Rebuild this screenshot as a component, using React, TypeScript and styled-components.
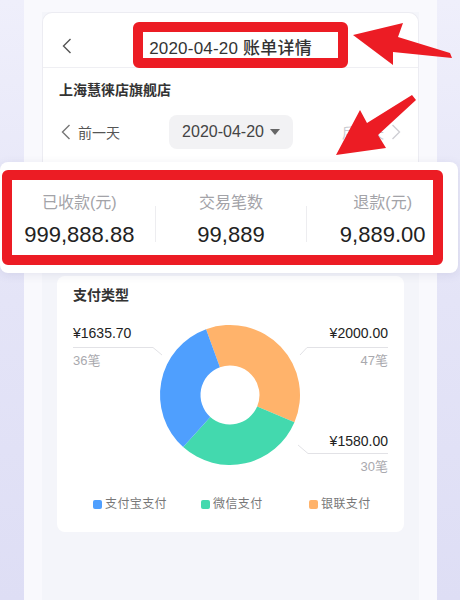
import React from 'react';
import styled, { createGlobalStyle } from 'styled-components';

const GlobalStyle = createGlobalStyle`
  html, body {
    margin: 0;
    padding: 0;
  }
  body {
    font-family: "Liberation Sans", "Noto Sans CJK SC", sans-serif;
    color: #333;
  }
`;

const RED = '#ec1c24';

const Page = styled.div`
  position: relative;
  width: 460px;
  height: 600px;
  overflow: hidden;
  display: flex;
  padding-left: 24px;
  box-sizing: border-box;
  background: linear-gradient(180deg, #efeffb 0%, #e4e4f7 50%, #dedef5 100%);
`;

const Phone = styled.div`
  width: 413px;
  height: 600px;
  box-sizing: border-box;
  padding: 12px 18px 0;
  background: #f9f9fd;
`;

const Screen = styled.div`
  height: 100%;
  background: #f4f5fa;
  display: flex;
  flex-direction: column;
`;

const HeaderCard = styled.div`
  background: #fff;
  border: 1px solid #ececf2;
  border-bottom: none;
  border-radius: 10px 10px 0 0;
  padding-bottom: 113px;
`;

const TitleBar = styled.div`
  position: relative;
  height: 54px;
  border-bottom: 1px solid #efeff3;
  display: flex;
  align-items: center;
  justify-content: center;
`;

const BackButton = styled.span`
  position: absolute;
  left: 19px;
  top: 25px;
  display: flex;
`;

const Title = styled.h1`
  margin: 0;
  padding-top: 12px;
  font-size: 17px;
  font-weight: 500;
  color: #333;
  letter-spacing: 0.2px;
`;

const ShopName = styled.div`
  padding: 12px 16px 0;
  font-size: 14px;
  line-height: 20px;
  font-weight: 600;
  color: #333;
`;

const DateNav = styled.div`
  margin-top: 15px;
  padding: 0 17px 0 18px;
  display: flex;
  align-items: center;
  justify-content: space-between;
`;

const DayLink = styled.span<{ disabled?: boolean }>`
  display: flex;
  align-items: center;
  gap: 7px;
  font-size: 14px;
  color: ${(p) => (p.disabled ? '#c9c9cf' : '#555')};
`;

const DatePill = styled.div`
  width: 124px;
  height: 34px;
  border-radius: 8px;
  background: #f2f2f4;
  display: flex;
  align-items: center;
  justify-content: center;
  gap: 6px;
  font-size: 16px;
  color: #444;
`;

const Caret = styled.span`
  width: 0;
  height: 0;
  border-left: 5px solid transparent;
  border-right: 5px solid transparent;
  border-top: 6px solid #666;
`;

const PayCard = styled.div`
  margin: 14px 15px 0 15px;
  background: #fff;
  border-radius: 8px;
  padding: 9px 15px 20px 16px;
`;

const CardTitle = styled.div`
  font-size: 14px;
  line-height: 20px;
  font-weight: 600;
  color: #333;
`;

const ChartBox = styled.div`
  position: relative;
  margin-top: 13px;
  width: 315px;
  height: 160px;
`;

const ChartLabel = styled.div<{ side: 'left' | 'right'; top: number; count?: boolean }>`
  position: absolute;
  ${(p) => (p.side === 'left' ? 'left: 0;' : 'right: 0;')}
  top: ${(p) => p.top}px;
  line-height: 20px;
  font-size: ${(p) => (p.count ? '13px' : '14px')};
  font-weight: ${(p) => (p.count ? 400 : 500)};
  color: ${(p) => (p.count ? '#a9a9ae' : '#222')};
  white-space: nowrap;
`;

const Legend = styled.div`
  margin-top: 18px;
  padding-left: 20px;
  display: grid;
  grid-template-columns: repeat(3, 108px);
`;

const LegendItem = styled.div`
  display: flex;
  align-items: center;
  gap: 3px;
  font-size: 12px;
  line-height: 16px;
  color: #777;
  letter-spacing: 0.4px;
`;

const Swatch = styled.span<{ color: string }>`
  width: 9px;
  height: 9px;
  border-radius: 2px;
  background: ${(p) => p.color};
`;

/* annotation layer (the zoomed callout and red markers lie over the page) */
const Callout = styled.div`
  position: absolute;
  left: 0;
  top: 162px;
  width: 458px;
  height: 111px;
  box-sizing: border-box;
  padding-left: 4px;
  background: #fff;
  border-radius: 8px;
  box-shadow: 0 2px 10px rgba(90, 90, 140, 0.12);
`;

const StatsRow = styled.div`
  display: grid;
  grid-template-columns: 1fr 1px 1fr 1px 1fr;
  align-items: center;
  height: 100%;
`;

const Stat = styled.div`
  display: flex;
  flex-direction: column;
  align-items: center;
  gap: 7px;
  padding-top: 6px;
`;

const StatLabel = styled.div`
  font-size: 16px;
  line-height: 22px;
  color: #a3a3a8;
`;

const StatValue = styled.div`
  font-size: 22px;
  line-height: 28px;
  color: #222;
`;

const StatDivider = styled.div`
  height: 36px;
  background: #ededf0;
  margin-top: 12px;
`;

const RedFrame = styled.div<{ left: number; top: number; w: number; h: number }>`
  position: absolute;
  left: ${(p) => p.left}px;
  top: ${(p) => p.top}px;
  width: ${(p) => p.w}px;
  height: ${(p) => p.h}px;
  box-sizing: border-box;
  border: 10px solid ${RED};
  border-radius: 6px;
  pointer-events: none;
`;

const ArrowLayer = styled.svg`
  position: absolute;
  left: 0;
  top: 0;
  pointer-events: none;
`;

const Chevron = ({ dir, color }: { dir: 'left' | 'right'; color: string }) => (
  <svg width="10" height="16" viewBox="0 0 10 16">
    <polyline
      points={dir === 'left' ? '8.5,1 1.5,8 8.5,15' : '1.5,1 8.5,8 1.5,15'}
      fill="none"
      stroke={color}
      strokeWidth="1.4"
    />
  </svg>
);

const slices = [
  { color: '#ffb36b', from: -20, to: 113 },
  { color: '#43d9ae', from: 113, to: 222 },
  { color: '#4f9ffe', from: 222, to: 340 },
];

const pt = (cx: number, cy: number, r: number, deg: number) => {
  const a = (deg * Math.PI) / 180;
  return `${(cx + r * Math.sin(a)).toFixed(2)},${(cy - r * Math.cos(a)).toFixed(2)}`;
};

const slicePath = (from: number, to: number) => {
  const cx = 157;
  const cy = 77;
  const R = 70;
  const r = 29.5;
  const big = to - from > 180 ? 1 : 0;
  return `M${pt(cx, cy, R, from)} A${R},${R} 0 ${big} 1 ${pt(cx, cy, R, to)} L${pt(
    cx,
    cy,
    r,
    to,
  )} A${r},${r} 0 ${big} 0 ${pt(cx, cy, r, from)} Z`;
};

const Donut = () => (
  <svg width="315" height="160" viewBox="0 0 315 160" style={{ display: 'block' }}>
    {slices.map((s) => (
      <path key={s.color} d={slicePath(s.from, s.to)} fill={s.color} />
    ))}
    <g fill="none" stroke="#e2e2e6" strokeWidth="1">
      <polyline points="0,29.5 80,29.5 89,37" />
      <polyline points="227,37 234,29.5 315,29.5" />
      <polyline points="225,127 235,135.5 315,135.5" />
    </g>
  </svg>
);

const stats = [
  { label: '已收款(元)', value: '999,888.88' },
  { label: '交易笔数', value: '99,889' },
  { label: '退款(元)', value: '9,889.00' },
];

export default function App() {
  return (
    <>
      <GlobalStyle />
      <Page>
        <Phone>
          <Screen>
            <HeaderCard>
              <TitleBar>
                <BackButton>
                  <Chevron dir="left" color="#555" />
                </BackButton>
                <Title>2020-04-20 账单详情</Title>
              </TitleBar>
              <ShopName>上海慧徕店旗舰店</ShopName>
              <DateNav>
                <DayLink>
                  <Chevron dir="left" color="#777" />
                  前一天
                </DayLink>
                <DatePill>
                  2020-04-20
                  <Caret />
                </DatePill>
                <DayLink disabled>
                  后一天
                  <Chevron dir="right" color="#cfcfd4" />
                </DayLink>
              </DateNav>
            </HeaderCard>

            <PayCard>
              <CardTitle>支付类型</CardTitle>
              <ChartBox>
                <Donut />
                <ChartLabel side="left" top={5}>¥1635.70</ChartLabel>
                <ChartLabel side="left" top={33} count>36笔</ChartLabel>
                <ChartLabel side="right" top={5}>¥2000.00</ChartLabel>
                <ChartLabel side="right" top={33} count>47笔</ChartLabel>
                <ChartLabel side="right" top={113}>¥1580.00</ChartLabel>
                <ChartLabel side="right" top={139} count>30笔</ChartLabel>
              </ChartBox>
              <Legend>
                <LegendItem>
                  <Swatch color="#4f9ffe" />
                  支付宝支付
                </LegendItem>
                <LegendItem>
                  <Swatch color="#43d9ae" />
                  微信支付
                </LegendItem>
                <LegendItem>
                  <Swatch color="#ffb36b" />
                  银联支付
                </LegendItem>
              </Legend>
            </PayCard>
          </Screen>
        </Phone>

        <RedFrame left={133} top={22} w={215} h={46} />

        <Callout>
          <StatsRow>
            {stats.map((s, i) => (
              <React.Fragment key={s.label}>
                {i > 0 && <StatDivider />}
                <Stat>
                  <StatLabel>{s.label}</StatLabel>
                  <StatValue>{s.value}</StatValue>
                </Stat>
              </React.Fragment>
            ))}
          </StatsRow>
          <RedFrame left={2} top={8} w={441} h={95} />
        </Callout>

        <ArrowLayer width="460" height="600" viewBox="0 0 460 600">
          <polygon points="353,35 403,23 398,37 450,53 452,58 393,52 393,65" fill={RED} />
          <polygon points="336,155 360,110 367,123 412,95 416,100 378,135 386,148" fill={RED} />
        </ArrowLayer>
      </Page>
    </>
  );
}
